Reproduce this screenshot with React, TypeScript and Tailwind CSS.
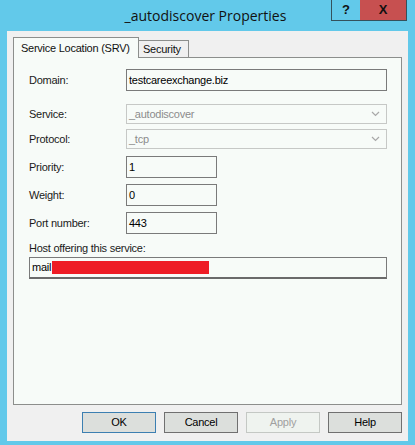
import React from 'react'

const ui = { fontFamily: '"Liberation Sans", Arial, sans-serif' }
const txt = 'text-[11px] tracking-[-0.25px]'

function Chevron() {
  return (
    <svg width="9" height="6" viewBox="0 0 9 6" className="mr-[6px]">
      <path d="M1 1 L4.5 4.5 L8 1" fill="none" stroke="#a8a8a8" strokeWidth="1.2" />
    </svg>
  )
}

function Row({ label, children, className }: { label: string; children: React.ReactNode; className?: string }) {
  return (
    <div className={`flex items-center ${className ?? ''}`}>
      <span className={`w-[97px] shrink-0 ${txt} text-[#1a1a1a]`}>{label}</span>
      {children}
    </div>
  )
}

function Field({ value, w }: { value: string; w: string }) {
  return (
    <div className={`${w} h-[22px] border border-[#7a7a7a] bg-[#f7fbf8] flex items-center px-[2px] ${txt} text-black`}>
      {value}
    </div>
  )
}

function Dropdown({ value }: { value: string }) {
  return (
    <div className={`w-[261px] h-[20px] border border-[#c6c8c6] bg-[#f7fbf8] flex items-center justify-between pl-[2px] ${txt} text-[#8c8c8c]`}>
      <span>{value}</span>
      <Chevron />
    </div>
  )
}

function Btn({ label, kind }: { label: string; kind?: 'default' | 'disabled' }) {
  const cls =
    kind === 'default'
      ? 'border-[#3c7fb1] bg-[#dcdfdc] text-black'
      : kind === 'disabled'
        ? 'border-[#c4c8c4] bg-[#eff3ef] text-[#a0a0a0]'
        : 'border-[#707070] bg-[#dcdfdc] text-black'
  return (
    <div className={`w-[74px] h-[21px] border flex items-center justify-center ${txt} ${cls}`}>{label}</div>
  )
}

export default function App() {
  return (
    <div className="w-[415px] h-[445px] bg-[#62c9ea] flex flex-col px-[7px] pb-[4px]" style={ui}>
      <div className="relative h-[32px] flex items-center justify-center">
        <span className="text-[14px] text-[#111] mr-[4px]" style={{ fontFamily: '"Open Sans", "Noto Sans", sans-serif' }}>
          _autodiscover Properties
        </span>
        <div className="absolute top-0 right-[1px] flex h-[21px] border-x border-b border-[#34515c]">
          <div className="w-[28px] flex items-center justify-center text-[13px] font-bold text-[#111]">?</div>
          <div className="w-[46px] bg-[#c75050] flex items-center justify-center text-[13px] font-bold text-[#111]">X</div>
        </div>
      </div>
      <div className="flex-1 bg-[#f0f0f0] flex flex-col px-[6px] pt-[6px] pb-[8px]">
        <div className="flex items-end h-[20px] relative z-10">
          <div className={`w-[126px] h-[21px] mb-[-1px] border-x border-t border-[#8c8e8c] bg-[#f7fbf8] flex items-center pl-[7px] ${txt} text-[#111] whitespace-nowrap`}>
            Service Location (SRV)
          </div>
          <div className={`w-[50px] h-[17px] border-r border-t border-[#8c8e8c] bg-[#f0f0f0] flex items-center pl-[4px] ${txt} text-[#111] whitespace-nowrap`}>
            Security
          </div>
        </div>
        <div className="h-[348px] border border-[#8c8e8c] bg-[#f7fbf8] flex flex-col pl-[15px] pr-[13px] pt-[11px]">
          <Row label="Domain:">
            <Field value="testcareexchange.biz" w="w-[261px]" />
          </Row>
          <Row label="Service:" className="mt-[13px]">
            <Dropdown value="_autodiscover" />
          </Row>
          <Row label="Protocol:" className="mt-[5px]">
            <Dropdown value="_tcp" />
          </Row>
          <Row label="Priority:" className="mt-[7px]">
            <Field value="1" w="w-[91px]" />
          </Row>
          <Row label="Weight:" className="mt-[6px]">
            <Field value="0" w="w-[91px]" />
          </Row>
          <Row label="Port number:" className="mt-[6px]">
            <Field value="443" w="w-[91px]" />
          </Row>
          <span className={`mt-[6px] ${txt} text-[#1a1a1a] leading-[16px]`}>Host offering this service:</span>
          <div className={`mt-[1px] w-[358px] h-[22px] border border-[#7a7a7a] border-b-2 border-b-[#6a6a6a] bg-[#f7fbf8] flex items-center pl-[2px] ${txt} text-black`}>
            <span>mail</span>
            <span className="ml-[1px] w-[157px] h-[13px] bg-[#ee1c25]" />
          </div>
        </div>
        <div className="mt-[7px] flex justify-end gap-[8px]">
          <Btn label="OK" kind="default" />
          <Btn label="Cancel" />
          <Btn label="Apply" kind="disabled" />
          <Btn label="Help" />
        </div>
      </div>
    </div>
  )
}
